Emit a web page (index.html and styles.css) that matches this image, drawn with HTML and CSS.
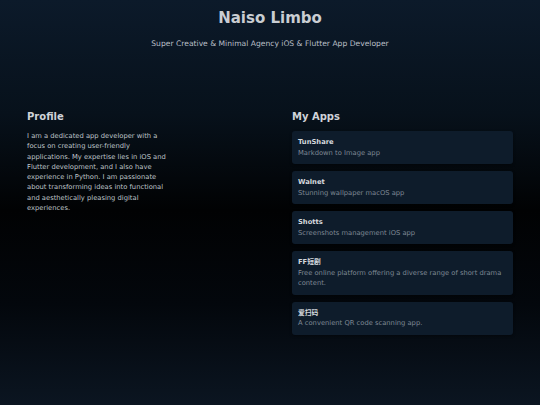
FILE: index.html
```html
<!DOCTYPE html>
<html lang="en">
<head>
<meta charset="utf-8">
<title>Naiso Limbo</title>
<link rel="stylesheet" href="styles.css">
</head>
<body>
<header class="hero">
  <h1 class="hero-title">Naiso Limbo</h1>
  <p class="hero-sub">Super Creative &amp; Minimal Agency iOS &amp; Flutter App Developer</p>
</header>
<main class="content">
  <section class="profile">
    <h2 class="section-title">Profile</h2>
    <p class="profile-text">I am a dedicated app developer with a focus on creating user-friendly applications. My expertise lies in iOS and Flutter development, and I also have experience in Python. I am passionate about transforming ideas into functional and aesthetically pleasing digital experiences.</p>
  </section>
  <section class="apps">
    <h2 class="section-title">My Apps</h2>
    <ul class="app-list">
      <li class="app-card"><div class="app-name">TunShare</div><div class="app-desc">Markdown to Image app</div></li>
      <li class="app-card"><div class="app-name">Walnet</div><div class="app-desc">Stunning wallpaper macOS app</div></li>
      <li class="app-card"><div class="app-name">Shotts</div><div class="app-desc">Screenshots management iOS app</div></li>
      <li class="app-card"><div class="app-name">FF短剧</div><div class="app-desc">Free online platform offering a diverse range of short drama content.</div></li>
      <li class="app-card"><div class="app-name">爱扫码</div><div class="app-desc">A convenient QR code scanning app.</div></li>
    </ul>
  </section>
</main>
</body>
</html>
```
FILE: styles.css
```css
html, body {
  margin: 0;
  padding: 0;
}
body {
  width: 540px;
  height: 405px;
  overflow: hidden;
  font-family: "DejaVu Sans", "Noto Sans CJK SC", sans-serif;
  color: #c3c7cc;
  background: linear-gradient(180deg, #0c1a2a 0%, #07111b 28%, #010203 52%, #03070c 75%, #0b1521 100%);
}
.hero {
  padding-top: 9px;
  text-align: center;
}
.hero-title {
  margin: 0;
  font-size: 15px;
  line-height: 18px;
  font-weight: bold;
  color: #c9cdd2;
}
.hero-sub {
  margin: 12px 0 0;
  font-size: 7.6px;
  line-height: 10px;
  color: #b9bfc6;
}
.content {
  display: grid;
  grid-template-columns: 221px 221px;
  column-gap: 44px;
  padding: 0 27px;
  margin-top: 62px;
}
.section-title {
  margin: 0 0 8px;
  font-size: 10px;
  line-height: 12px;
  font-weight: bold;
  color: #cfd3d8;
}
.profile-text {
  margin: 0;
  width: 143px;
  font-size: 6.75px;
  line-height: 10.3px;
  color: #bfc4c9;
}
.app-list {
  list-style: none;
  margin: 0;
  padding: 0;
  display: flex;
  flex-direction: column;
  gap: 7px;
}
.app-card {
  background: #0e1c2b;
  border-radius: 3px;
  padding: 6px 7px 6px 6px;
  box-shadow: 0 1px 3px rgba(0, 0, 0, 0.4);
}
.app-name {
  font-size: 6.75px;
  line-height: 10.5px;
  font-weight: bold;
  color: #d4d8dd;
}
.app-desc {
  font-size: 6.75px;
  line-height: 10.5px;
  color: #7e8894;
}
```
